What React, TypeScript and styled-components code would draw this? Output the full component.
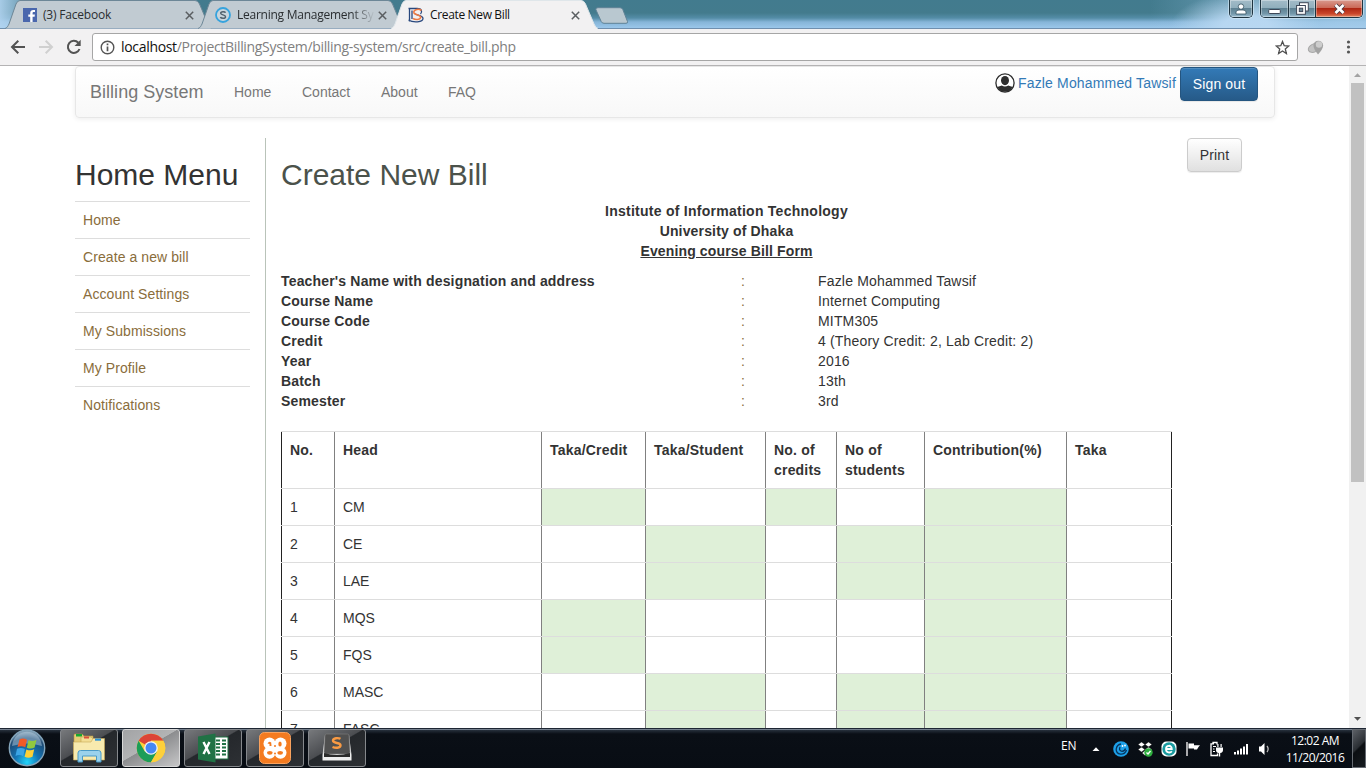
import React from "react";
import styled, { createGlobalStyle } from "styled-components";

const GlobalStyle = createGlobalStyle`
  * { box-sizing: border-box; }
  html, body { margin: 0; padding: 0; overflow: hidden; }
  body { font: 14px/20px "Liberation Sans", Arial, sans-serif; color: #333; background: #fff; }
`;

const Desktop = styled.div`
  width: 1366px;
  height: 768px;
  display: flex;
  flex-direction: column;
  overflow: hidden;
`;

/* ---------- browser chrome ---------- */

const TitleBar = styled.header`
  height: 29px;
  flex: none;
  display: flex;
  align-items: flex-start;
  padding-left: 5px;
  border-bottom: 1px solid #6f8fae;
  background:
    linear-gradient(90deg, rgba(178, 212, 240, 0.9) 0, rgba(140, 190, 220, 0) 40px),
    radial-gradient(ellipse 75px 34px at 1246px 26px, rgba(185, 216, 242, 0.95) 30%, rgba(170, 205, 235, 0) 100%),
    linear-gradient(90deg, rgba(150, 195, 228, 0) 1150px, rgba(165, 205, 236, 0.75) 1340px),
    linear-gradient(#427b8e 0, #437b8d 13px, #548da7 18px, #86b5d8 22px, #9bc7ea 28px);
`;

const Tab = styled.div<{ $width: number; $layer: number; $front?: boolean }>`
  position: relative;
  z-index: ${(p) => p.$layer};
  flex: none;
  width: ${(p) => p.$width}px;
  height: 29px;
  margin-right: -14px;
  padding: 0 18px 0 17px;
  display: flex;
  align-items: center;
  font: 12px/28px "Open Sans", "Noto Sans", sans-serif;
  color: ${(p) => (p.$front ? "#111" : "#2a2e31")};
`;

const TabShape = styled.svg`
  position: absolute;
  inset: 0;
  z-index: -1;
`;

const TabIcon = styled.svg`
  flex: none;
  margin-right: 6px;
  margin-top: 1px;
`;

const TabTitle = styled.span<{ $spacing: number; $fade?: boolean }>`
  flex: 1;
  overflow: hidden;
  white-space: nowrap;
  letter-spacing: ${(p) => p.$spacing}px;
  margin-top: 1px;
  ${(p) => p.$fade && "mask-image: linear-gradient(90deg, #000 115px, transparent 138px);"}
`;

const CloseGlyph = styled.svg`
  flex: none;
  margin-left: 4px;
  margin-top: 1px;
`;

const NewTab = styled.svg`
  flex: none;
  margin: 7px 0 0 11px;
`;

const WindowControls = styled.div`
  margin-left: auto;
  display: flex;
  gap: 7px;
  padding-right: 3px;
`;

const ControlGroup = styled.div`
  height: 18px;
  display: flex;
  border: 1px solid #1f3440;
  border-top: 0;
  border-radius: 0 0 5px 5px;
  box-shadow: 0 0 0 1px rgba(220, 238, 250, 0.55), inset 0 0 0 1px rgba(255, 255, 255, 0.4);
  overflow: hidden;
`;

const Control = styled.div<{ $width: number; $danger?: boolean }>`
  width: ${(p) => p.$width}px;
  display: flex;
  align-items: center;
  justify-content: center;
  box-shadow: inset 0 0 0 1px rgba(255, 255, 255, 0.35);
  background: ${(p) =>
    p.$danger
      ? "linear-gradient(#d99a8e 0, #cb6a58 45%, #ae2713 50%, #c9452a 80%, #e28560 100%)"
      : "linear-gradient(#a3bcc8 0, #91afbd 45%, #5f8293 50%, #7397a9 80%, #9dbfd2 100%)"};
  & + & { border-left: 1px solid #1f3440; }
`;

const Toolbar = styled.div`
  height: 37px;
  flex: none;
  display: flex;
  align-items: center;
  background: #f2f1f2;
  border-bottom: 1px solid #b4b3b4;
`;

const NavIcons = styled.div`
  width: 92px;
  display: flex;
  align-items: center;
  gap: 12px;
  padding-left: 10px;
`;

const AddressBox = styled.div`
  width: 1206px;
  height: 28px;
  display: flex;
  align-items: center;
  border: 1px solid #a6a6a6;
  border-radius: 3px;
  background: #fff;
  padding: 0 7px 0 7px;
`;

const Url = styled.div`
  flex: 1;
  margin-left: 6px;
  font: 14px/26px "Open Sans", "Noto Sans", sans-serif;
  letter-spacing: -0.32px;
  color: #808080;
  b { font-weight: 400; color: #111; }
`;

const ToolbarEnd = styled.div`
  flex: 1;
  display: flex;
  align-items: center;
  justify-content: space-between;
  padding: 0 15px 0 9px;
`;

/* ---------- page ---------- */

const Viewport = styled.div`
  flex: 1;
  min-height: 0;
  display: flex;
`;

const Page = styled.div`
  width: 1349px;
  padding: 0 74px 0 75px;
  overflow: hidden;
`;

const Navbar = styled.nav`
  height: 52px;
  display: flex;
  align-items: flex-start;
  border: 1px solid #e7e7e7;
  border-radius: 4px;
  background: linear-gradient(#fff, #f8f8f8);
  box-shadow: 0 1px 5px rgba(0, 0, 0, 0.075);
  padding-right: 16px;
`;

const Brand = styled.a`
  width: 143px;
  padding: 15px 0 0 14px;
  font-size: 18px;
  letter-spacing: 0.03px;
  color: #777;
`;

const NavLink = styled.a<{ $width: number }>`
  width: ${(p) => p.$width}px;
  padding: 15px 0 0 15px;
  color: #777;
`;

const UserArea = styled.div`
  margin-left: auto;
  display: flex;
  align-items: flex-start;
`;

const UserName = styled.a`
  margin: 6px 3px 0 3px;
  width: 159px;
  white-space: nowrap;
  letter-spacing: 0.16px;
  color: #337ab7;
`;

const Avatar = styled.svg`
  margin-top: 6px;
`;

const Button = styled.button<{ $primary?: boolean; $width: number }>`
  width: ${(p) => p.$width}px;
  height: 34px;
  padding: 0;
  border-radius: 4px;
  font: 14px/20px "Liberation Sans", Arial, sans-serif;
  letter-spacing: 0.15px;
  color: ${(p) => (p.$primary ? "#fff" : "#333")};
  border: 1px solid ${(p) => (p.$primary ? "#245580" : "#ccc")};
  background: ${(p) =>
    p.$primary ? "linear-gradient(#337ab7, #265a88)" : "linear-gradient(#fff, #e0e0e0)"};
  box-shadow: inset 0 1px 0 rgba(255, 255, 255, 0.15), 0 1px 1px rgba(0, 0, 0, 0.075);
`;

const Columns = styled.div`
  margin-top: 20px;
  height: 700px;
  display: flex;
  align-items: stretch;
`;

const Sidebar = styled.aside`
  flex: none;
  width: 190px;
  padding-right: 15px;
`;

const Heading = styled.h2<{ $color: string }>`
  margin: 20px 0 10px;
  font-size: 30px;
  font-weight: 400;
  line-height: 33px;
  white-space: nowrap;
  color: ${(p) => p.$color};
`;

const MenuItem = styled.a`
  display: block;
  height: 37px;
  padding: 8px;
  border-top: 1px solid #ddd;
  letter-spacing: 0.08px;
  color: #8a6d3b;
`;

const Main = styled.main`
  flex: none;
  width: 907px;
  border-left: 1px solid #b9c3b9;
  padding-left: 15px;
  overflow: hidden;
`;

const Actions = styled.div`
  margin-left: 15px;
`;

const FormTitle = styled.div`
  text-align: center;
  font-weight: 700;
  margin-bottom: 10px;
`;

const TitleLine = styled.div<{ $spacing: number; $underline?: boolean }>`
  letter-spacing: ${(p) => p.$spacing}px;
  text-decoration: ${(p) => (p.$underline ? "underline" : "none")};
`;

const InfoRow = styled.div`
  display: grid;
  grid-template-columns: 460px 77px 1fr;
  height: 20px;
`;

const InfoLabel = styled.span`
  font-weight: 700;
  letter-spacing: 0.17px;
`;

const InfoValue = styled.span`
  letter-spacing: 0.17px;
`;

const Colon = styled.span`
  color: #8a6d3b;
`;

const BillTable = styled.div`
  margin-top: 20px;
  width: 891px;
`;

const TableRow = styled.div<{ $head?: boolean }>`
  display: grid;
  grid-template-columns: 53px 207px 104px 120px 71px 88px 142px 106px;
  height: ${(p) => (p.$head ? 57 : 37)}px;
  border-top: 1px solid #ddd;
  font-weight: ${(p) => (p.$head ? 700 : 400)};
  letter-spacing: ${(p) => (p.$head ? 0.2 : 0)}px;
`;

const Cell = styled.div<{ $green?: boolean }>`
  padding: 8px 4px 8px 8px;
  border-left: 1px solid #808080;
  background: ${(p) => (p.$green ? "#dff0d8" : "transparent")};
  overflow: hidden;
  &:first-child { border-left-color: #222; }
  &:last-child { border-right: 1px solid #222; }
`;

const Scrollbar = styled.div`
  width: 17px;
  display: flex;
  flex-direction: column;
  align-items: center;
  background: #f1f1f1;
  svg { flex: none; }
`;

const ScrollThumb = styled.div`
  width: 13px;
  height: 399px;
  background: #c1c1c1;
`;

const ScrollTrack = styled.div`
  flex: 1;
`;

/* ---------- taskbar ---------- */

const Taskbar = styled.footer`
  height: 40px;
  flex: none;
  display: flex;
  align-items: flex-start;
  background: linear-gradient(#1d2633 0, #1d2633 1px, #75808e 1px, #75808e 2px, #27313c 2px, #0a0f16 6px, #080d14 100%);
`;

const StartOrb = styled.svg`
  margin: 1px 13px 0 7px;
`;

const TaskButton = styled.div<{ $active?: boolean }>`
  width: 58px;
  height: 38px;
  margin: 1px 4px 0 0;
  display: flex;
  align-items: center;
  justify-content: center;
  border: 1px solid ${(p) => (p.$active ? "#d8d8d8" : "#85888c")};
  border-radius: 3px;
  background: ${(p) =>
    p.$active
      ? "linear-gradient(150deg, #a2a3a5 0, #b3b4b5 45%, #8c8d8f 46%, #c6c6c7 100%)"
      : "linear-gradient(150deg, #77797c 0, #4b4d51 44%, #25282c 46%, #2d3034 100%)"};
`;

const Tray = styled.div`
  margin-left: auto;
  height: 40px;
  display: flex;
  align-items: center;
  color: #fff;
  font: 12px/17px "Open Sans", "Noto Sans", sans-serif;
`;

const Language = styled.span`
  width: 29px;
  margin-top: -5px;
  letter-spacing: -0.2px;
`;

const TrayIcons = styled.div`
  display: flex;
  align-items: center;
  gap: 8px;
  width: 195px;
  margin-top: 1px;
`;

const TrayArrow = styled.svg`
  margin-right: 3px;
`;

const Clock = styled.div`
  width: 60px;
  text-align: center;
  white-space: nowrap;
  letter-spacing: -0.5px;
  margin-right: 7px;
  margin-top: 1px;
`;

const ShowDesktop = styled.div`
  width: 14px;
  height: 39px;
  margin-top: 1px;
  border: 1px solid #666b72;
  background: linear-gradient(135deg, #5c6066 0, #2a2e33 45%, #0b0e12 50%, #171b20 100%);
`;

const Cross = () => (
  <CloseGlyph width="9" height="9" viewBox="0 0 9 9">
    <path d="M0.8 0.8 8.2 8.2M8.2 0.8 0.8 8.2" stroke="#5a5e61" strokeWidth="1.5" />
  </CloseGlyph>
);

const Shape = ({ width, front }: { width: number; front?: boolean }) => (
  <TabShape width={width} height="29" viewBox={`0 0 ${width} 29`}>
    <path
      d={`M0 28.5C2 28 3 26 4 24L11 4Q12.500 .5 15 .5H${width - 17}Q${width - 14} .5 ${width - 12.5} 4L${width - 4} 24Q${width - 2} 28.500 ${width} 28.500`}
      fill={front ? "#f2f1f2" : "#c1cbd2"}
      stroke={front ? "#dfe6ea" : "#6d8797"}
    />
    {front && <path d={`M1 28.500H${width - 1}`} stroke="#f2f1f2" />}
  </TabShape>
);

const headers = ["No.", "Head", "Taka/Credit", "Taka/Student", "No. of credits", "No of students", "Contribution(%)", "Taka"];

const bills: { head: string; green: number[] }[] = [
  { head: "CM", green: [2, 4, 6] },
  { head: "CE", green: [3, 5, 6] },
  { head: "LAE", green: [3, 5, 6] },
  { head: "MQS", green: [2, 6] },
  { head: "FQS", green: [2, 6] },
  { head: "MASC", green: [3, 5, 6] },
  { head: "FASC", green: [3, 5, 6] },
];

const info = [
  ["Teacher's Name with designation and address", "Fazle Mohammed Tawsif"],
  ["Course Name", "Internet Computing"],
  ["Course Code", "MITM305"],
  ["Credit", "4 (Theory Credit: 2, Lab Credit: 2)"],
  ["Year", "2016"],
  ["Batch", "13th"],
  ["Semester", "3rd"],
];

const menu = ["Home", "Create a new bill", "Account Settings", "My Submissions", "My Profile", "Notifications"];

const BrowserTabs = () => (
  <>
    <Tab $width={207} $layer={1}>
      <Shape width={207} />
      <TabIcon width="15" height="14" viewBox="0 0 15 14">
        <rect x="1" width="14" height="14" fill="#4a67ad" />
        <path d="M10.600 14V8.700h2l.3-2.200H10.600V5.200c0-.7.3-1.100 1.100-1.100H13V2.100C12.600 2 12 2 11.300 2 9.400 2 8.200 3.100 8.200 5v1.500H6.300v2.200h1.900V14z" fill="#fff" />
      </TabIcon>
      <TabTitle $spacing={-0.2}>(3) Facebook</TabTitle>
      <Cross />
    </Tab>
    <Tab $width={207} $layer={2}>
      <Shape width={207} />
      <TabIcon width="16" height="16" viewBox="0 0 16 16">
        <circle cx="8" cy="8" r="7" fill="#c9d5dc" stroke="#36a3dd" strokeWidth="1.800" />
        <path d="M10.500 5.700C10 4.400 5.700 4.200 5.700 6.300 5.700 8.300 10.500 7.400 10.500 9.700 10.500 12 5.900 11.700 5.400 10" fill="none" stroke="#51616c" strokeWidth="1.500" />
      </TabIcon>
      <TabTitle $spacing={-0.25} $fade>Learning Management Sy</TabTitle>
      <Cross />
    </Tab>
    <Tab $width={207} $layer={3} $front>
      <Shape width={207} front />
      <TabIcon width="16" height="16" viewBox="0 0 16 16">
        <path d="M.5 1.500H9C14 1.500 14.500 5 12.500 7M1.500 1.500V14.500M.5 13C5 15.800 15 15.500 15 11.500 15 8.500 10 8.500 7 7M4 3.500V12" fill="none" stroke="#28477d" strokeWidth="1.300" />
        <path d="M13.500 3.500C10 1 4.800 3 6 6 7.500 8.500 13 7.500 12.700 10.500 12 13 7.500 13 5 11.500" fill="none" stroke="#ee7a43" strokeWidth="1.600" />
      </TabIcon>
      <TabTitle $spacing={-0.35}>Create New Bill</TabTitle>
      <Cross />
    </Tab>
    <NewTab width="34" height="17" viewBox="0 0 34 17">
      <path d="M3 .7H25Q27 .7 27.800 2.500L32.500 14.500Q33 16.300 31 16.300H9Q7 16.300 6.200 14.500L.9 2.700Q.5 .7 3 .7Z" fill="#b9c8d0" stroke="#5f8296" />
    </NewTab>
  </>
);

const Titlebar = () => (
  <TitleBar>
    <BrowserTabs />
    <WindowControls>
      <ControlGroup>
        <Control $width={22}>
          <svg width="12" height="12" viewBox="0 0 12 12">
            <path d="M1 11V9Q1 7 4 7H8Q11 7 11 9V11Z" fill="#fff" stroke="#34505f" strokeWidth=".8" />
            <circle cx="6" cy="3.600" r="2.700" fill="#fff" stroke="#34505f" strokeWidth=".8" />
          </svg>
        </Control>
      </ControlGroup>
      <ControlGroup>
        <Control $width={27}>
          <svg width="13" height="12" viewBox="0 0 13 12">
            <rect x=".7" y="6.500" width="11.600" height="4" rx="1" fill="#fff" stroke="#3e4858" />
          </svg>
        </Control>
        <Control $width={27}>
          <svg width="13" height="13" viewBox="0 0 13 13">
            <rect x="3.500" y=".7" width="8.800" height="8.300" fill="#fff" stroke="#3e4858" />
            <rect x=".6" y="3.500" width="8.800" height="8.800" fill="#fff" stroke="#3e4858" />
            <rect x="3.300" y="6.200" width="3.400" height="3.400" fill="#6d8b9a" stroke="#3e4858" />
          </svg>
        </Control>
        <Control $width={47} $danger>
          <svg width="13" height="12" viewBox="0 0 13 12">
            <path d="M2.500 2 10.500 10M10.500 2 2.500 10" stroke="#4b3943" strokeWidth="4.500" />
            <path d="M2.500 2 10.500 10M10.500 2 2.500 10" stroke="#fff" strokeWidth="2.700" />
          </svg>
        </Control>
      </ControlGroup>
    </WindowControls>
  </TitleBar>
);

const AddressBar = () => (
  <Toolbar>
    <NavIcons>
      <svg width="16" height="16" viewBox="0 0 16 16">
        <path d="M15 8H2.500M8.300 1.700 2 8l6.300 6.300" fill="none" stroke="#535353" strokeWidth="2" />
      </svg>
      <svg width="16" height="16" viewBox="0 0 16 16">
        <path d="M1 8h12.500M7.700 1.700 14 8l-6.300 6.300" fill="none" stroke="#d0d0d0" strokeWidth="2" />
      </svg>
      <svg width="16" height="16" viewBox="0 0 16 16">
        <path d="M13.500 10A6 6 0 1 1 12.300 3.800" fill="none" stroke="#535353" strokeWidth="2" />
        <path d="M14.700 .8V7H8.500Z" fill="#535353" />
      </svg>
    </NavIcons>
    <AddressBox>
      <svg width="15" height="15" viewBox="0 0 15 15">
        <circle cx="7.500" cy="7.500" r="6.300" fill="none" stroke="#555" strokeWidth="1.400" />
        <path d="M7.500 6.500v4.800M7.500 3.500v1.800" stroke="#555" strokeWidth="1.700" />
      </svg>
      <Url>
        <b>localhost</b>/ProjectBillingSystem/billing-system/src/create_bill.php
      </Url>
      <svg width="15" height="15" viewBox="0 0 15 15">
        <path d="M7.500 1.500 9.200 5.700 13.800 6 10.300 9 11.400 13.500 7.500 11 3.600 13.500 4.700 9 1.200 6 5.800 5.700Z" fill="none" stroke="#505050" strokeWidth="1.300" />
      </svg>
    </AddressBox>
    <ToolbarEnd>
      <svg width="18" height="15" viewBox="0 0 18 15">
        <ellipse cx="7" cy="8" rx="6" ry="4" transform="rotate(-25 7 8)" fill="#c3c3c3" stroke="#a8a8a8" />
        <path d="M11 14.500Q6.500 9 6.500 5.500a4.800 4.800 0 0 1 9.600 0Q16 9 11 14.500Z" fill="#a2a2a2" />
        <circle cx="12" cy="4.500" r="3.200" fill="#cdcdcd" />
      </svg>
      <svg width="5" height="14" viewBox="0 0 5 14">
        <circle cx="2.500" cy="2" r="1.600" fill="#555" />
        <circle cx="2.500" cy="7" r="1.600" fill="#555" />
        <circle cx="2.500" cy="12" r="1.600" fill="#555" />
      </svg>
    </ToolbarEnd>
  </Toolbar>
);

const TrayArea = () => (
  <Tray>
    <Language>EN</Language>
    <TrayIcons>
      <TrayArrow width="12" height="6" viewBox="0 0 12 6"><path d="M2.500 5 6 1.200 9.500 5Z" fill="#fff" /></TrayArrow>
      <svg width="16" height="16" viewBox="0 0 16 16">
        <circle cx="8" cy="8" r="7.800" fill="#1da0e8" />
        <path d="M13.500 9Q12 13.500 7.500 13.200 3 12.500 3.200 8 4 3.500 8 3M7 6Q5.500 10 9 10.300 12 10 12.500 7.500" fill="none" stroke="#07345c" strokeWidth="1.300" />
        <circle cx="9.500" cy="5" r=".9" fill="#fff" /><circle cx="12" cy="4.500" r=".9" fill="#fff" />
      </svg>
      <svg width="16" height="16" viewBox="0 0 16 16">
        <path d="M4.500 1 8 3.500 4.500 6 1 3.500ZM11.500 1 15 3.500 11.500 6 8 3.500ZM4.500 6 8 8.500 4.500 11 1 8.500ZM11.500 6 15 8.500 11.500 11 8 8.500ZM8 9.500 11 12 8 14.500 5 12Z" fill="#fff" stroke="#111" strokeWidth=".5" />
        <circle cx="11.500" cy="11.500" r="4.200" fill="#2faf3f" />
        <path d="M9.500 11.500 11 13 13.500 10" fill="none" stroke="#fff" strokeWidth="1.300" />
      </svg>
      <svg width="16" height="16" viewBox="0 0 16 16">
        <rect x=".5" y=".5" width="15" height="15" rx="5" fill="#fff" />
        <circle cx="8" cy="8" r="6.700" fill="#1a9ba0" />
        <path d="M5.200 8H10.800C10.800 3.600 5 3.800 5 8 5 12.300 9.500 12 10.800 10.300" fill="none" stroke="#fff" strokeWidth="1.800" />
      </svg>
      <svg width="16" height="16" viewBox="0 0 16 16">
        <path d="M2 1V15" stroke="#fff" strokeWidth="1.300" />
        <path d="M3.500 2.500H9V4.200H15L13.500 6 12 8.500H9V7.500H3.500Z" fill="#fff" />
      </svg>
      <svg width="16" height="16" viewBox="0 0 16 16">
        <path d="M4 3.500V1.500H8V3.500M5 2.800H2V14.500H8.500V12.500" fill="none" stroke="#fff" strokeWidth="1.300" />
        <path d="M4 5.500H7M4 8H5.500M4 10.500H6" stroke="#fff" strokeWidth="1.200" />
        <path d="M7 6.500H14V9Q14 11.500 11.200 12V15.500H9.800V12Q7 11.500 7 9ZM8.300 3H9.500V6H8.300ZM11.500 3H12.700V6H11.500Z" fill="#fff" />
      </svg>
      <svg width="16" height="16" viewBox="0 0 16 16">
        <path d="M1 11h2v2.500H1zM4 9.500h2v4H4zM7 7.500h2v6H7zM10 5.500h2v8h-2zM13 3h2v10.500h-2z" fill="#fff" />
      </svg>
      <svg width="16" height="16" viewBox="0 0 16 16">
        <path d="M2 5.500H4L7.500 2V14L4 10.500H2Z" fill="#fff" />
        <path d="M10 5Q12.300 8 10 11" fill="none" stroke="#bbb" strokeWidth="1.300" />
      </svg>
    </TrayIcons>
    <Clock>
      <div>12:02 AM</div>
      <div>11/20/2016</div>
    </Clock>
    <ShowDesktop />
  </Tray>
);

const Dock = () => (
  <Taskbar>
    <StartOrb width="40" height="38" viewBox="0 0 40 38">
      <defs>
        <radialGradient id="orb" cx="50%" cy="90%" r="85%">
          <stop offset="0" stopColor="#22d5fb" />
          <stop offset=".4" stopColor="#1474b4" />
          <stop offset=".8" stopColor="#1d4a74" />
          <stop offset="1" stopColor="#7f9db3" />
        </radialGradient>
      </defs>
      <circle cx="20" cy="19" r="17.700" fill="url(#orb)" stroke="#84a5bb" strokeWidth="1.400" />
      <path d="M5 17C7 -2 33 -2 35 17Q20 12 5 17Z" fill="#c3dae8" opacity=".45" />
      <path d="M12.500 10.500Q16 8.500 20 10.800L18.300 18.300Q14.500 16.300 10.500 18Z" fill="#f05a27" />
      <path d="M21.500 11.200Q25.500 13 29.500 10.800L27.600 18.500Q24 20.500 19.800 18.700Z" fill="#92c83e" />
      <path d="M10 19.800Q14 18 17.900 20L16.200 27.300Q12.500 25 8.500 27Z" fill="#3ca5e5" />
      <path d="M19.400 20.500Q23.500 22.300 27.200 20.300L25.500 27.800Q21.500 29.800 17.600 27.800Z" fill="#fdd037" />
    </StartOrb>
    <TaskButton>
      <svg width="34" height="32" viewBox="0 0 34 32">
        <path d="M2 3Q2 2 3 2H10L12 4H21V26H2Z" fill="#e7cd78" stroke="#b8943f" strokeWidth=".6" />
        <rect x="4" y="2" width="6" height="2.500" fill="#16a830" />
        <path d="M9 5H19L21 7H29V27H9Z" fill="#f3de94" stroke="#c3a452" strokeWidth=".6" />
        <rect x="12" y="4.500" width="5" height="2" fill="#d9503c" />
        <path d="M1.500 10H19L21 6.500H32.500V28H1.500Z" fill="#f8eaae" stroke="#c7a856" strokeWidth=".6" />
        <rect x="23" y="6.500" width="6" height="2.200" fill="#2f93d5" />
        <path d="M6 30V21Q6 18.500 8.500 18.500H26.500Q29 18.500 29 21V30H24.500V24H10.500V30Z" fill="#9bd2ec" stroke="#4b9bc7" />
      </svg>
    </TaskButton>
    <TaskButton $active>
      <svg width="30" height="30" viewBox="0 0 30 30">
        <circle cx="15" cy="15" r="14.300" fill="#fdd03b" />
        <path d="M15 15 2.620 7.850A14.300 14.300 0 0 1 27.380 7.850H15Z" fill="#dc4437" />
        <path d="M2.620 7.850A14.300 14.300 0 0 0 15 29.300L21.200 18.600 15 15 8.800 18.600Z" fill="#1c9d58" />
        <path d="M15 29.300A14.300 14.300 0 0 0 27.380 7.850H15V15L21.200 18.600Z" fill="#fdd03b" />
        <circle cx="15" cy="15" r="6.800" fill="#f3f3f3" />
        <circle cx="15" cy="15" r="5.500" fill="#4687f4" />
      </svg>
    </TaskButton>
    <TaskButton>
      <svg width="32" height="30" viewBox="0 0 32 30">
        <rect x="15" y="4" width="16" height="22" fill="#fff" stroke="#207245" />
        <path d="M19 7.500h4M25 7.500h4M19 11h4M25 11h4M19 14.500h4M25 14.500h4M19 18h4M25 18h4M19 21.500h4M25 21.500h4" stroke="#207245" strokeWidth="2" />
        <path d="M1 3.500 18.500.5V29.500L1 26.500Z" fill="#207245" />
        <path d="M6.500 9 12.500 21M12.500 9 6.500 21" stroke="#fff" strokeWidth="2.400" />
      </svg>
    </TaskButton>
    <TaskButton>
      <svg width="32" height="32" viewBox="0 0 32 32">
        <rect x=".5" y=".5" width="31" height="31" rx="5" fill="#f47b20" stroke="#f9a25e" />
        <g fill="#fff">
          <circle cx="10.500" cy="11.500" r="6" />
          <circle cx="21.500" cy="11.500" r="6" />
          <circle cx="10.500" cy="20.800" r="6" />
          <circle cx="21.500" cy="20.800" r="6" />
          <rect x="10" y="12" width="12" height="8.500" />
        </g>
        <g fill="#f47b20">
          <path d="M8.500 11.500Q10 8.800 12.200 10.500L12.500 14H10.500V12Z" />
          <ellipse cx="21" cy="12" rx="1.700" ry="2.600" />
          <ellipse cx="10.800" cy="20.800" rx="2.800" ry="1.900" />
          <ellipse cx="21.200" cy="20.800" rx="2.800" ry="1.900" />
          <circle cx="16" cy="14" r="1" />
          <circle cx="16" cy="21.500" r="1" />
        </g>
      </svg>
    </TaskButton>
    <TaskButton>
      <svg width="32" height="32" viewBox="0 0 32 32">
        <path d="M4 3 1.500 23V28.500H30.500V23L28 3Z" fill="#eee" />
        <path d="M5.500 2H26.500Q28 2 28 3.500L29 20Q29 22 27.500 22H4.500Q3 22 3 20L4 3.500Q4 2 5.500 2Z" fill="#505050" stroke="#808080" strokeWidth=".6" />
        <path d="M3 21Q16 25 29 21V25H3Z" fill="#2b2b2b" />
        <path d="M19.500 6.800C17.500 5.800 12 5.600 12 8.600 12 11.800 19.500 10.100 19.500 13.300 19.500 16.500 14 16 11.500 15" fill="none" stroke="#f99a43" strokeWidth="2.400" />
      </svg>
    </TaskButton>
    <TrayArea />
  </Taskbar>
);

export default function App() {
  return (
    <Desktop>
      <GlobalStyle />
      <Titlebar />
      <AddressBar />
      <Viewport>
        <Page>
          <Navbar>
            <Brand>Billing System</Brand>
            <NavLink $width={68}>Home</NavLink>
            <NavLink $width={79}>Contact</NavLink>
            <NavLink $width={67}>About</NavLink>
            <NavLink $width={60}>FAQ</NavLink>
            <UserArea>
              <Avatar width="20" height="20" viewBox="0 0 20 20">
                <defs>
                  <clipPath id="face"><circle cx="10" cy="10" r="8.700" /></clipPath>
                </defs>
                <circle cx="10" cy="10" r="9.100" fill="#fff" stroke="#2d2d2d" strokeWidth="1.300" />
                <g clipPath="url(#face)" fill="#2d2d2d">
                  <ellipse cx="10" cy="7.600" rx="4" ry="4.600" />
                  <path d="M1 20V15.500Q2 13.800 6.800 12.600 10 14.500 13.200 12.600 18 13.800 19 15.500V20Z" />
                </g>
              </Avatar>
              <UserName>Fazle Mohammed Tawsif</UserName>
              <Button $primary $width={78}>Sign out</Button>
            </UserArea>
          </Navbar>
          <Columns>
            <Sidebar>
              <Heading $color="#333">Home Menu</Heading>
              {menu.map((m) => (
                <MenuItem key={m}>{m}</MenuItem>
              ))}
            </Sidebar>
            <Main>
              <Heading $color="#4b524b">Create New Bill</Heading>
              <FormTitle>
                <TitleLine $spacing={0.26}>Institute of Information Technology</TitleLine>
                <TitleLine $spacing={0.16}>University of Dhaka</TitleLine>
                <TitleLine $spacing={0.14} $underline>Evening course Bill Form</TitleLine>
              </FormTitle>
              {info.map(([label, value]) => (
                <InfoRow key={label}>
                  <InfoLabel>{label}</InfoLabel>
                  <Colon>:</Colon>
                  <InfoValue>{value}</InfoValue>
                </InfoRow>
              ))}
              <BillTable>
                <TableRow $head>
                  {headers.map((h) => (
                    <Cell key={h}>{h}</Cell>
                  ))}
                </TableRow>
                {bills.map((bill, i) => (
                  <TableRow key={bill.head}>
                    {headers.map((h, col) => (
                      <Cell key={h} $green={bill.green.includes(col)}>
                        {col === 0 ? i + 1 : col === 1 ? bill.head : null}
                      </Cell>
                    ))}
                  </TableRow>
                ))}
              </BillTable>
            </Main>
            <Actions>
              <Button $width={55}>Print</Button>
            </Actions>
          </Columns>
        </Page>
        <Scrollbar>
          <svg width="17" height="17" viewBox="0 0 17 17"><path d="M5 11 8.500 7.300 12 11Z" fill="#a3a3a3" /></svg>
          <ScrollThumb />
          <ScrollTrack />
          <svg width="17" height="17" viewBox="0 0 17 17"><path d="M5 6 8.500 9.700 12 6Z" fill="#505050" /></svg>
        </Scrollbar>
      </Viewport>
      <Dock />
    </Desktop>
  );
}
